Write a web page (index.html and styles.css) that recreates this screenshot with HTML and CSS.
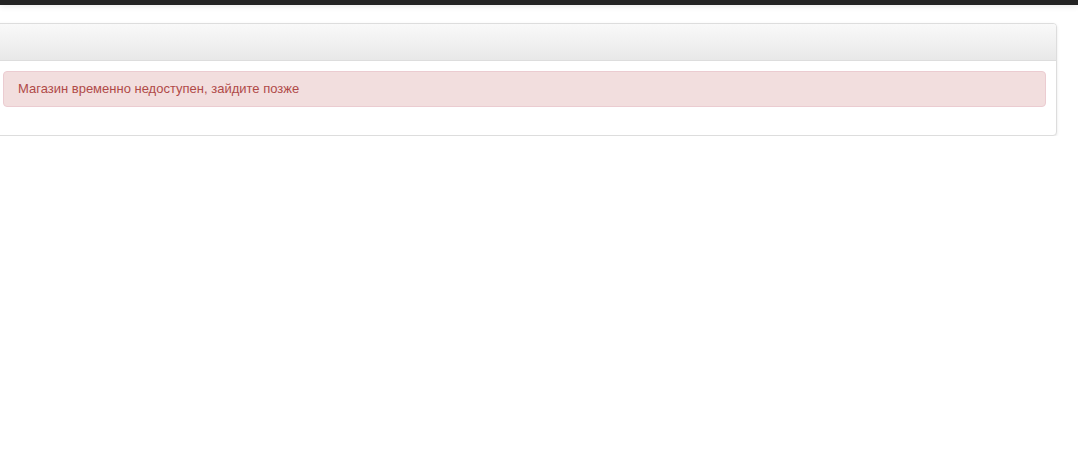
FILE: index.html
```html
<!DOCTYPE html>
<html lang="ru">
<head>
<meta charset="utf-8">
<title>Магазин</title>
<link rel="stylesheet" href="styles.css">
</head>
<body>
<div class="navbar"></div>
<div class="container">
  <div class="panel">
    <div class="panel-heading"></div>
    <div class="panel-body">
      <div class="alert">Магазин временно недоступен, зайдите позже</div>
    </div>
  </div>
</div>
</body>
</html>
```
FILE: styles.css
```css
html, body {
  margin: 0;
  padding: 0;
  background: #fff;
}
body {
  font-family: "Liberation Sans", Arial, sans-serif;
  font-size: 13px;
  line-height: 18px;
  color: #333;
}
.navbar {
  height: 5px;
  background: #222;
  box-shadow: 0 1px 6px rgba(0, 0, 0, 0.12);
}
.container {
  padding: 18px 21px 0 0;
  margin-left: -9px;
}
.panel {
  border: 1px solid #ddd;
  border-radius: 4px;
  background: #fff;
  box-shadow: 0 1px 3px rgba(0, 0, 0, 0.1);
  overflow: hidden;
}
.panel-heading {
  height: 36px;
  background: linear-gradient(to bottom, #f9f9f9 0%, #e8e8e8 100%);
  border-bottom: 1px solid #ddd;
}
.panel-body {
  padding: 10px 10px 10px 11px;
}
.alert {
  background: #f2dede;
  border: 1px solid #ebccd1;
  border-radius: 4px;
  color: #b04a48;
  padding: 8px 14px;
  margin-bottom: 18px;
}
```
